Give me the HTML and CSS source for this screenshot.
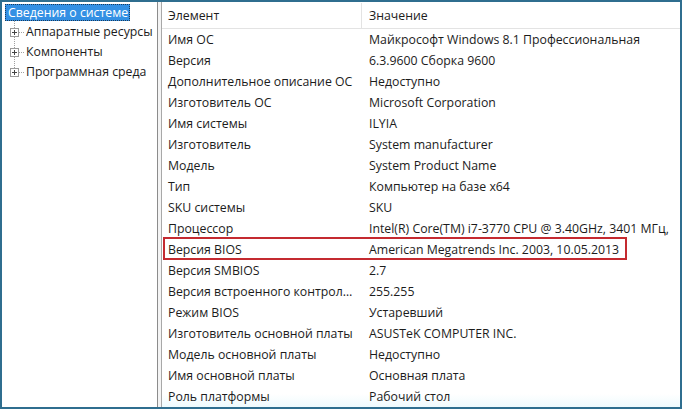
FILE: index.html
```html
<!DOCTYPE html>
<html lang="ru">
<head>
<meta charset="utf-8">
<link rel="stylesheet" href="styles.css">
</head>
<body>
<div class="window">
  <div class="tree">
    <div class="root"><span class="sel">Сведения о системе</span></div>
    <div class="branch">
      <div class="node"><span class="plus"></span><span class="dots"></span><span class="label">Аппаратные ресурсы</span></div>
      <div class="node"><span class="plus"></span><span class="dots"></span><span class="label">Компоненты</span></div>
      <div class="node"><span class="plus"></span><span class="dots"></span><span class="label">Программная среда</span></div>
    </div>
  </div>
  <div class="splitter"></div>
  <div class="list">
    <div class="head">
      <div class="c1">Элемент</div>
      <div class="c2">Значение</div>
    </div>
    <div class="row"><div class="c1">Имя ОС</div><div class="c2">Майкрософт Windows 8.1 Профессиональная</div></div>
    <div class="row"><div class="c1">Версия</div><div class="c2">6.3.9600 Сборка 9600</div></div>
    <div class="row"><div class="c1">Дополнительное описание ОС</div><div class="c2">Недоступно</div></div>
    <div class="row"><div class="c1">Изготовитель ОС</div><div class="c2">Microsoft Corporation</div></div>
    <div class="row"><div class="c1">Имя системы</div><div class="c2">ILYIA</div></div>
    <div class="row"><div class="c1">Изготовитель</div><div class="c2">System manufacturer</div></div>
    <div class="row"><div class="c1">Модель</div><div class="c2">System Product Name</div></div>
    <div class="row"><div class="c1">Тип</div><div class="c2">Компьютер на базе x64</div></div>
    <div class="row"><div class="c1">SKU системы</div><div class="c2">SKU</div></div>
    <div class="row"><div class="c1">Процессор</div><div class="c2">Intel(R) Core(TM) i7-3770 CPU @ 3.40GHz, 3401 МГц,</div></div>
    <div class="row marked"><div class="c1">Версия BIOS</div><div class="c2">American Megatrends Inc. 2003, 10.05.2013</div></div>
    <div class="row"><div class="c1">Версия SMBIOS</div><div class="c2">2.7</div></div>
    <div class="row"><div class="c1">Версия встроенного контроллера</div><div class="c2">255.255</div></div>
    <div class="row"><div class="c1">Режим BIOS</div><div class="c2">Устаревший</div></div>
    <div class="row"><div class="c1">Изготовитель основной платы</div><div class="c2">ASUSTeK COMPUTER INC.</div></div>
    <div class="row"><div class="c1">Модель основной платы</div><div class="c2">Недоступно</div></div>
    <div class="row"><div class="c1">Имя основной платы</div><div class="c2">Основная плата</div></div>
    <div class="row"><div class="c1">Роль платформы</div><div class="c2">Рабочий стол</div></div>
  </div>
</div>
</body>
</html>
```
FILE: styles.css
```css
html, body {
  margin: 0;
  padding: 0;
  background: #ffffff;
}
body {
  font-family: "Open Sans", "Noto Sans", sans-serif;
  font-size: 12.3px;
  color: #1c1c1c;
}
.window {
  box-sizing: border-box;
  width: 682px;
  height: 409px;
  border: 2px solid #2f6e8f;
  display: flex;
  overflow: hidden;
  background: #ffffff;
}
.tree {
  width: 155px;
  flex: none;
  padding-top: 2px;
  box-sizing: border-box;
}
.root {
  height: 17px;
  padding-left: 3px;
  display: flex;
}
.sel {
  background: #3390e4;
  color: #ffffff;
  padding: 0 2px 0 3px;
  line-height: 17px;
  outline: 1px dotted #1a3a5a;
  outline-offset: -1px;
  white-space: nowrap;
}
.branch {
  margin-left: 12px;
  border-left: 1px dotted #a0a0a0;
  height: 54px;
  padding-top: 1px;
}
.node {
  height: 20px;
  display: flex;
  align-items: center;
  margin-left: -5px;
  white-space: nowrap;
}
.plus {
  width: 7px;
  height: 7px;
  border: 1px solid #9a9a9a;
  background: #fff;
  position: relative;
  flex: none;
}
.plus::before {
  content: "";
  position: absolute;
  left: 1px;
  top: 3px;
  width: 5px;
  height: 1px;
  background: #444;
}
.plus::after {
  content: "";
  position: absolute;
  left: 3px;
  top: 1px;
  width: 1px;
  height: 5px;
  background: #444;
}
.dots {
  width: 5px;
  border-top: 1px dotted #a0a0a0;
  margin-right: 2px;
  flex: none;
}
.label {
  line-height: 20px;
}
.splitter {
  width: 5px;
  flex: none;
  box-sizing: border-box;
  border-left: 1px solid #8c8c8c;
  border-right: 1px solid #a8a8a8;
  background: #f4f4f4;
}
.list {
  flex: 1;
  min-width: 0;
  display: flex;
  flex-direction: column;
  background: linear-gradient(to bottom, #ffffff 0, #ffffff 392px, #eefafd 405px);
}
.head {
  height: 25px;
  display: flex;
  border-bottom: 1px solid #e3e3e3;
  flex: none;
  padding-top: 1px;
}
.head .c1 {
  border-right: 1px solid #e3e3e3;
}
.row {
  height: 21px;
  display: flex;
  flex: none;
  position: relative;
}
.c1 {
  width: 200px;
  flex: none;
  box-sizing: border-box;
  padding-left: 6px;
  display: flex;
  align-items: center;
  white-space: nowrap;
  overflow: hidden;
  text-overflow: ellipsis;
}
.row .c1 {
  display: block;
  line-height: 21px;
  padding-right: 3px;
}
.c2 {
  padding-left: 7px;
  display: flex;
  align-items: center;
  white-space: nowrap;
}
.marked::after {
  content: "";
  position: absolute;
  left: 1px;
  top: -2px;
  width: 464px;
  height: 23px;
  box-sizing: border-box;
  border: 2px solid #c42a30;
}
```
